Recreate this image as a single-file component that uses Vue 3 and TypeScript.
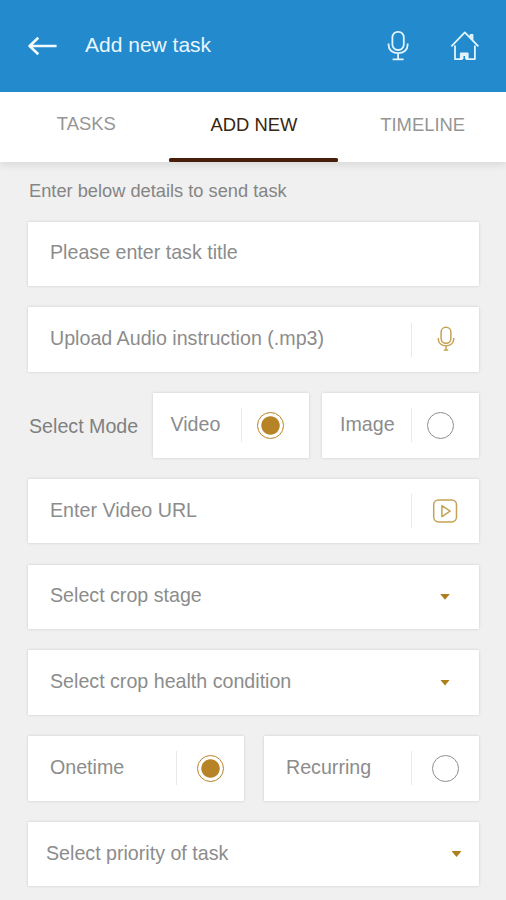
<script setup lang="ts">
import { ref } from 'vue'

type Mode = 'Video' | 'Image'
type Frequency = 'Onetime' | 'Recurring'

const tabs: string[] = ['TASKS', 'ADD NEW', 'TIMELINE']
const activeTab = ref<string>('ADD NEW')
const modes: Mode[] = ['Video', 'Image']
const mode = ref<Mode>('Video')
const frequencies: Frequency[] = ['Onetime', 'Recurring']
const frequency = ref<Frequency>('Onetime')
</script>

<template>
  <div class="screen">
    <header class="app-bar">
      <svg class="back" viewBox="0 0 30 20" width="30" height="20">
        <path d="M28.6 10H1.6M10.3 1.8L1.6 10l8.7 8.2" />
      </svg>
      <h1 class="title">Add new task</h1>
      <svg class="bar-mic" viewBox="0 0 22 32" width="22" height="32">
        <rect x="5.4" y="1.8" width="11.4" height="18.2" rx="5.4" />
        <path d="M1.6 13.6v1.6c0 4.700 4.100 8 9.500 8s9.500-3.300 9.500-8v-1.600M11.100 23.400V29M5.600 29.300h11" />
      </svg>
      <svg class="bar-home" viewBox="0 0 30 32" width="30" height="32">
        <path d="M1.400 16.400L14.800 2.400l13.600 14M20.600 8V4.800h1.900v5.400" />
        <path d="M5 15.500v13.600h5.800v-5.600h6.900v5.600h7.200V15.500M12.600 29.100v-4h3.300v4M10.800 29.100h1.800M15.900 29.100h1.800" />
      </svg>
    </header>

    <nav class="tabs">
      <button
        v-for="tab in tabs"
        :key="tab"
        class="tab"
        :class="{ active: activeTab === tab }"
        @click="activeTab = tab"
      >
        <span class="tab-label">{{ tab }}</span>
        <span class="indicator"></span>
      </button>
    </nav>

    <main class="content">
      <p class="intro">Enter below details to send task</p>

      <div class="form">
        <div class="field"><span class="text">Please enter task title</span></div>

        <div class="field">
          <span class="text">Upload Audio instruction (.mp3)</span>
          <span class="trail divided">
            <svg class="gold-icon mic" viewBox="0 0 18 26" width="18" height="26">
              <rect x="4.1" y="1.3" width="9.8" height="16" rx="4.7" />
              <path d="M1.3 12v1.3c0 3.800 3.300 6.500 7.700 6.500s7.700-2.700 7.700-6.500V12M9 19.800v4M6.800 24h4.400" />
            </svg>
          </span>
        </div>

        <div class="mode-row">
          <span class="mode-label">Select Mode</span>
          <div v-for="m in modes" :key="m" class="field choice" @click="mode = m">
            <span class="text">{{ m }}</span>
            <span class="trail divided">
              <span class="radio" :class="{ checked: mode === m }"></span>
            </span>
          </div>
        </div>

        <div class="field">
          <span class="text low">Enter Video URL</span>
          <span class="trail divided">
            <svg class="gold-icon play" viewBox="0 0 26 26" width="26" height="26">
              <rect x="1.7" y="1.9" width="22.8" height="22" rx="4.8" />
              <path d="M9.900 7.600v11l8.200-5.500z" />
            </svg>
          </span>
        </div>

        <div class="field">
          <span class="text">Select crop stage</span>
          <span class="trail"><span class="caret"></span></span>
        </div>

        <div class="field">
          <span class="text">Select crop health condition</span>
          <span class="trail"><span class="caret"></span></span>
        </div>

        <div class="frequency-row">
          <div v-for="f in frequencies" :key="f" class="field" @click="frequency = f">
            <span class="text low">{{ f }}</span>
            <span class="trail divided">
              <span class="radio" :class="{ checked: frequency === f }"></span>
            </span>
          </div>
        </div>

        <div class="field priority">
          <span class="text low">Select priority of task</span>
          <span class="trail"><span class="caret"></span></span>
        </div>
      </div>
    </main>
  </div>
</template>

<style>
body {
  margin: 0;
  background: #f0f0f0;
}
</style>

<style scoped>
.screen {
  box-sizing: border-box;
  height: 900px;
  overflow: hidden;
  background: #f0f0f0;
  color: #8c8c8c;
  font-family: "Liberation Sans", Arial, sans-serif;
  font-size: 19.65px;
}
.app-bar {
  position: relative;
  z-index: 1;
  box-sizing: border-box;
  display: flex;
  align-items: center;
  height: 92px;
  padding: 0 26px 0 28px;
  background: #228acd;
}
.app-bar svg {
  fill: none;
  stroke: #e2f4ff;
  stroke-width: 1.8;
  stroke-linejoin: round;
}
.app-bar .back {
  stroke: #f0faff;
  stroke-width: 2.6;
}
.title {
  flex: 1;
  margin: 0 0 3px 27px;
  color: #e9f7ff;
  font-size: 21px;
  font-weight: 400;
}
.bar-home {
  margin-left: 41px;
}
.tabs {
  display: grid;
  grid-template-columns: repeat(3, 1fr);
  height: 70px;
  background: #fff;
  box-shadow: 0 2px 9px rgba(0, 0, 0, 0.12);
}
.tab {
  display: flex;
  flex-direction: column;
  border: 0;
  padding: 0;
  background: none;
  color: #959595;
  font: 18.4px "Liberation Sans", Arial, sans-serif;
}
.tab-label {
  flex: 1;
  align-self: center;
  padding-left: 2px;
  line-height: 66px;
}
.tab:first-child .tab-label {
  padding-left: 4px;
  line-height: 64px;
}
.indicator {
  align-self: stretch;
  height: 4px;
  margin: 0 -0.5px 0.5px 0.5px;
  border-radius: 1.5px;
}
.active .indicator {
  background: #471e0b;
}
.tab.active {
  color: #38250f;
}
.content {
  padding: 18px 27px 0 28px;
}
.intro {
  margin: 0 0 20.5px 1px;
  font-size: 18.25px;
  line-height: 21px;
  color: #858585;
}
.form {
  display: grid;
  grid-auto-rows: 64.5px;
  row-gap: 21.25px;
}
.field {
  box-sizing: border-box;
  display: flex;
  align-items: center;
  padding-left: 22px;
  background: #fff;
  border-radius: 1px;
  box-shadow: 0 0 3px rgba(0, 0, 0, 0.16);
}
.text {
  flex: 1;
  padding-bottom: 3px;
  white-space: nowrap;
}
.text.low,
.choice .text {
  padding-bottom: 1px;
}
.trail {
  box-sizing: border-box;
  display: flex;
  align-items: center;
  justify-content: center;
  width: 68px;
  height: 34px;
}
.divided {
  border-left: 1px solid #e9e9e9;
}
.gold-icon {
  fill: none;
  stroke: #c5a354;
  stroke-width: 1.5;
  stroke-linejoin: round;
}
.mic {
  margin-bottom: 1px;
}
.play {
  margin-right: 2px;
}
.mode-row {
  display: grid;
  grid-template-columns: 111px 156px 157px;
  column-gap: 13.5px;
}
.mode-label {
  align-self: center;
  padding: 2px 0 0 1px;
  white-space: nowrap;
  color: #808080;
}
.choice {
  padding-left: 18px;
}
.choice .trail {
  padding-right: 10px;
}
.frequency-row {
  display: grid;
  grid-template-columns: 216px 215px;
  justify-content: space-between;
}
.radio {
  box-sizing: border-box;
  width: 27px;
  height: 27px;
  border: 1px solid #8e8e8e;
  border-radius: 50%;
}
.radio.checked {
  border-color: #b78327;
  background: radial-gradient(circle, #b78327 8.8px, transparent 9.6px);
}
.caret {
  width: 10px;
  height: 6px;
  background: #ad7e1c;
  clip-path: polygon(0 0, 100% 0, 50% 100%);
}
.priority {
  padding-left: 18px;
}
.priority .trail {
  width: 45px;
}
</style>
